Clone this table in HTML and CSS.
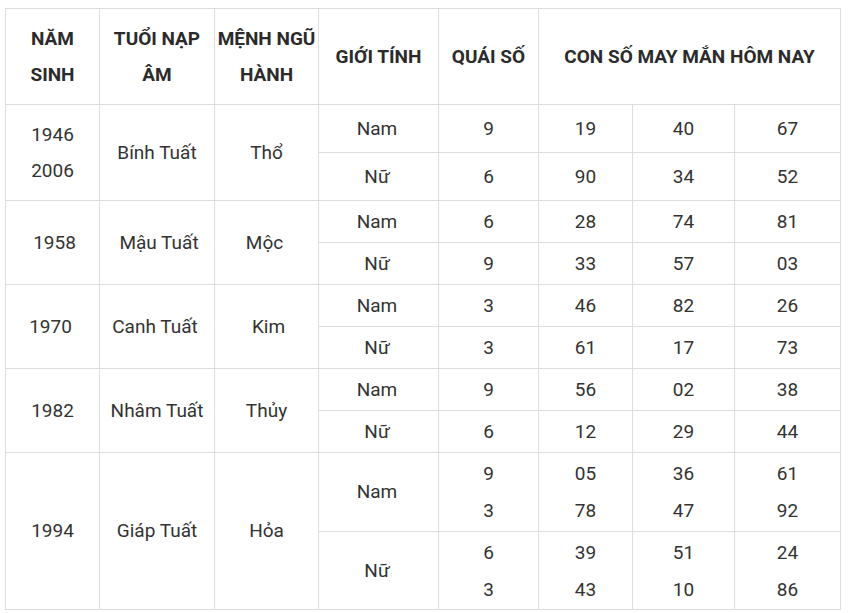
FILE: index.html
```html
<!DOCTYPE html>
<html lang="vi">
<head>
<meta charset="utf-8">
<title>Con số may mắn</title>
<link rel="stylesheet" href="styles.css">
</head>
<body>
<table class="lucky">
  <colgroup>
    <col class="c1"><col class="c2"><col class="c3"><col class="c4"><col class="c5"><col class="c6"><col class="c7"><col class="c8">
  </colgroup>
  <thead>
    <tr class="r-head">
      <th>NĂM<br>SINH</th>
      <th>TUỔI NẠP<br>ÂM</th>
      <th>MỆNH NGŨ<br>HÀNH</th>
      <th>GIỚI TÍNH</th>
      <th>QUÁI SỐ</th>
      <th colspan="3">CON SỐ MAY MẮN HÔM NAY</th>
    </tr>
  </thead>
  <tbody>
    <tr class="r-tall">
      <td rowspan="2" class="multi">1946<br>2006</td>
      <td rowspan="2">Bính Tuất</td>
      <td rowspan="2">Thổ</td>
      <td class="sex">Nam</td><td>9</td><td>19</td><td>40</td><td>67</td>
    </tr>
    <tr class="r-tall">
      <td class="sex">Nữ</td><td>6</td><td>90</td><td>34</td><td>52</td>
    </tr>
    <tr class="r-std">
      <td rowspan="2" class="shift-r">1958</td>
      <td rowspan="2" class="shift-r">Mậu Tuất</td>
      <td rowspan="2" class="shift-l">Mộc</td>
      <td class="sex">Nam</td><td>6</td><td>28</td><td>74</td><td>81</td>
    </tr>
    <tr class="r-std">
      <td class="sex">Nữ</td><td>9</td><td>33</td><td>57</td><td>03</td>
    </tr>
    <tr class="r-std">
      <td rowspan="2" class="shift-l">1970</td>
      <td rowspan="2" class="shift-l">Canh Tuất</td>
      <td rowspan="2" class="shift-r">Kim</td>
      <td class="sex">Nam</td><td>3</td><td>46</td><td>82</td><td>26</td>
    </tr>
    <tr class="r-std">
      <td class="sex">Nữ</td><td>3</td><td>61</td><td>17</td><td>73</td>
    </tr>
    <tr class="r-std">
      <td rowspan="2">1982</td>
      <td rowspan="2">Nhâm Tuất</td>
      <td rowspan="2">Thủy</td>
      <td class="sex">Nam</td><td>9</td><td>56</td><td>02</td><td>38</td>
    </tr>
    <tr class="r-std">
      <td class="sex">Nữ</td><td>6</td><td>12</td><td>29</td><td>44</td>
    </tr>
    <tr class="r-big">
      <td rowspan="2">1994</td>
      <td rowspan="2">Giáp Tuất</td>
      <td rowspan="2">Hỏa</td>
      <td class="sex">Nam</td>
      <td class="pair">9<br>3</td>
      <td class="pair">05<br>78</td>
      <td class="pair">36<br>47</td>
      <td class="pair">61<br>92</td>
    </tr>
    <tr class="r-big2">
      <td class="sex">Nữ</td>
      <td class="pair">6<br>3</td>
      <td class="pair">39<br>43</td>
      <td class="pair">51<br>10</td>
      <td class="pair">24<br>86</td>
    </tr>
  </tbody>
</table>
</body>
</html>
```

FILE: styles.css
```css
html, body {
  margin: 0;
  padding: 0;
  background: #ffffff;
}

body {
  padding: 8px 0 0 5px;
  font-family: Roboto, "Noto Sans", "Liberation Sans", sans-serif;
  color: #333333;
}

.lucky {
  border-collapse: collapse;
  table-layout: fixed;
  width: 836px;
  font-size: 19px;
}

.c1 { width: 94px; }
.c2 { width: 115px; }
.c3 { width: 104px; }
.c4 { width: 120px; }
.c5 { width: 100px; }
.c6 { width: 94px; }
.c7 { width: 102px; }
.c8 { width: 106px; }

.lucky th,
.lucky td {
  border: 1px solid #dddddd;
  padding: 0;
  text-align: center;
  vertical-align: middle;
  line-height: 36px;
}

.lucky th {
  font-weight: 700;
  color: #2b2b2b;
}

.lucky td {
  font-weight: 400;
}

.r-head { height: 96px; }
.r-tall { height: 48px; }
.r-std { height: 42px; }
.r-big { height: 79px; }
.r-big2 { height: 78px; }

.lucky td.pair {
  line-height: 37px;
}

.lucky td.sex {
  padding-right: 3px;
}

.lucky td.shift-r {
  padding-left: 4px;
}

.lucky td.shift-l {
  padding-right: 4px;
}
```
